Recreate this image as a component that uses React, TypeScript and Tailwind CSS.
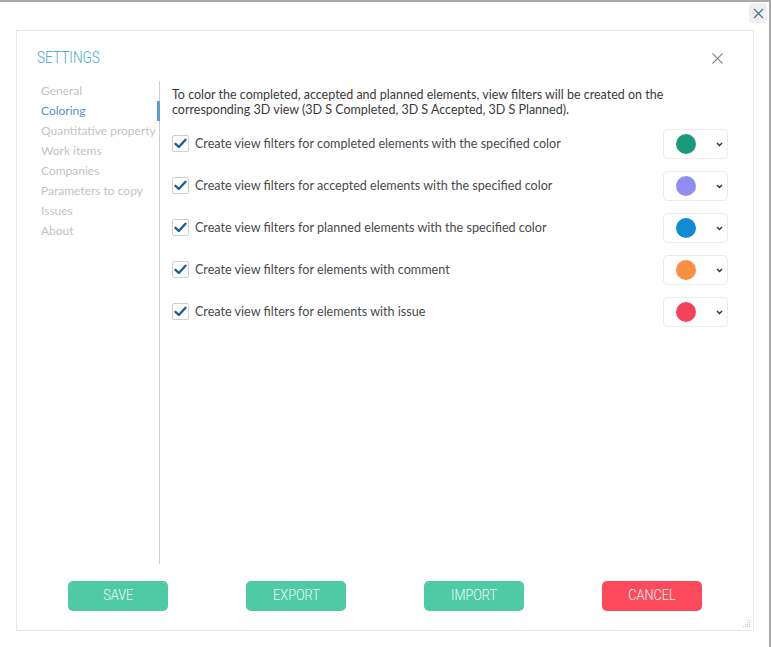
import React from 'react';

const menu = ['General', 'Coloring', 'Quantitative property', 'Work items', 'Companies', 'Parameters to copy', 'Issues', 'About'];

const rows = [
  { label: 'Create view filters for completed elements with the specified color', color: '#1b9a7b' },
  { label: 'Create view filters for accepted elements with the specified color', color: '#8f8cf2' },
  { label: 'Create view filters for planned elements with the specified color', color: '#128bd0' },
  { label: 'Create view filters for elements with comment', color: '#f88f42' },
  { label: 'Create view filters for elements with issue', color: '#f2435a' },
];

const narrow = { fontFamily: 'Roboto, sans-serif' };

const Check = () => (
  <span className="flex h-[17px] w-[17px] shrink-0 items-center justify-center rounded-[2px] border border-[#cfcfcf] bg-white">
    <svg width="13" height="11" viewBox="0 0 13 11">
      <path d="M1.5 5.8 L4.8 9 L11.5 1.8" fill="none" stroke="#1d5f97" strokeWidth="2.4" strokeLinecap="round" strokeLinejoin="round" />
    </svg>
  </span>
);

const ColorPick = ({ color }: { color: string }) => (
  <div className="flex h-[30px] w-[65px] items-center rounded-[5px] border border-[#ececec] bg-white pl-[12px]">
    <span className="h-[20px] w-[20px] rounded-full" style={{ backgroundColor: color }} />
    <svg className="ml-[20px]" width="7" height="5" viewBox="0 0 7 5">
      <path d="M1 1 L3.5 3.5 L6 1" fill="none" stroke="#333" strokeWidth="1.5" />
    </svg>
  </div>
);

const Button = ({ text, red }: { text: string; red?: boolean }) => (
  <button
    className={`flex h-[30px] w-[100px] items-center justify-center rounded-[5px] text-[15.5px] font-light text-[#f2fbf8] ${red ? 'bg-[#fc4a5c]' : 'bg-[#4ecba5]'}`}
    style={narrow}
  >
    <span className="inline-block scale-x-[0.82]">{text}</span>
  </button>
);

export default function App() {
  return (
    <div className="relative h-[647px] w-[771px] overflow-hidden border-t-2 border-r-2 border-[#a9a9a9] bg-white" style={{ fontFamily: 'Lato, sans-serif' }}>
      <div className="absolute right-[2px] top-[1px] flex h-[20px] w-[18px] items-center justify-center rounded-[3px] bg-[#efefef]">
        <svg width="11" height="11" viewBox="0 0 11 11">
          <path d="M1 1 L10 10 M10 1 L1 10" stroke="#4f7394" strokeWidth="1.3" />
        </svg>
      </div>

      <div className="ml-[16px] mt-[28px] flex h-[601px] w-[738px] flex-col border border-[#e6e6e6] bg-white">
        <div className="flex h-[50px] shrink-0 items-center justify-between pl-[20px] pr-[30px] pt-[4px]">
          <span className="inline-block origin-left scale-x-[0.8] text-[17px] font-light text-[#4fa9cc]" style={narrow}>SETTINGS</span>
          <svg width="11" height="11" viewBox="0 0 11 11">
            <path d="M0.5 0.5 L10.5 10.5 M10.5 0.5 L0.5 10.5" stroke="#8a8a8a" strokeWidth="1.1" />
          </svg>
        </div>

        <div className="flex h-[483px] shrink-0">
          <div className="w-[143px] shrink-0 border-r border-[#cfcfcf] pl-[24px]">
            {menu.map((m) => (
              <div
                key={m}
                className={`relative h-[20px] whitespace-nowrap text-[12px] leading-[20px] ${m === 'Coloring' ? 'text-[#5b8fc9]' : 'text-[#c3c3c3]'}`}
              >
                {m}
                {m === 'Coloring' && <span className="absolute right-[-1px] top-0 h-[20px] w-[3px] bg-[#5d9bd0]" />}
              </div>
            ))}
          </div>

          <div className="flex-1 pl-[12px] pr-[25px] pt-[6px]">
            <p className="text-[12.5px] leading-[15px] text-[#3a3a3a]">
              To color the completed, accepted and planned elements, view filters will be created on the
              <br />
              corresponding 3D view (3D S Completed, 3D S Accepted, 3D S Planned).
            </p>
            <div className="mt-[12px] flex flex-col gap-[12px]">
              {rows.map((r) => (
                <div key={r.label} className="flex h-[30px] items-center justify-between">
                  <div className="flex items-center gap-[6px]">
                    <Check />
                    <span className="text-[12.6px] text-[#4a4a4a]">{r.label}</span>
                  </div>
                  <ColorPick color={r.color} />
                </div>
              ))}
            </div>
          </div>
        </div>

        <div className="relative flex flex-1 items-start gap-[78px] pl-[51px] pt-[17px]">
          <Button text="SAVE" />
          <Button text="EXPORT" />
          <Button text="IMPORT" />
          <Button text="CANCEL" red />
          <svg className="absolute bottom-[2px] right-[2px]" width="9" height="9" viewBox="0 0 9 9">
            <g fill="#cfcfcf">
              <rect x="7" y="1" width="1.2" height="1.2" />
              <rect x="5" y="3" width="1.2" height="1.2" />
              <rect x="7" y="3" width="1.2" height="1.2" />
              <rect x="3" y="5" width="1.2" height="1.2" />
              <rect x="5" y="5" width="1.2" height="1.2" />
              <rect x="7" y="5" width="1.2" height="1.2" />
              <rect x="1" y="7" width="1.2" height="1.2" />
              <rect x="3" y="7" width="1.2" height="1.2" />
              <rect x="5" y="7" width="1.2" height="1.2" />
              <rect x="7" y="7" width="1.2" height="1.2" />
            </g>
          </svg>
        </div>
      </div>
    </div>
  );
}
